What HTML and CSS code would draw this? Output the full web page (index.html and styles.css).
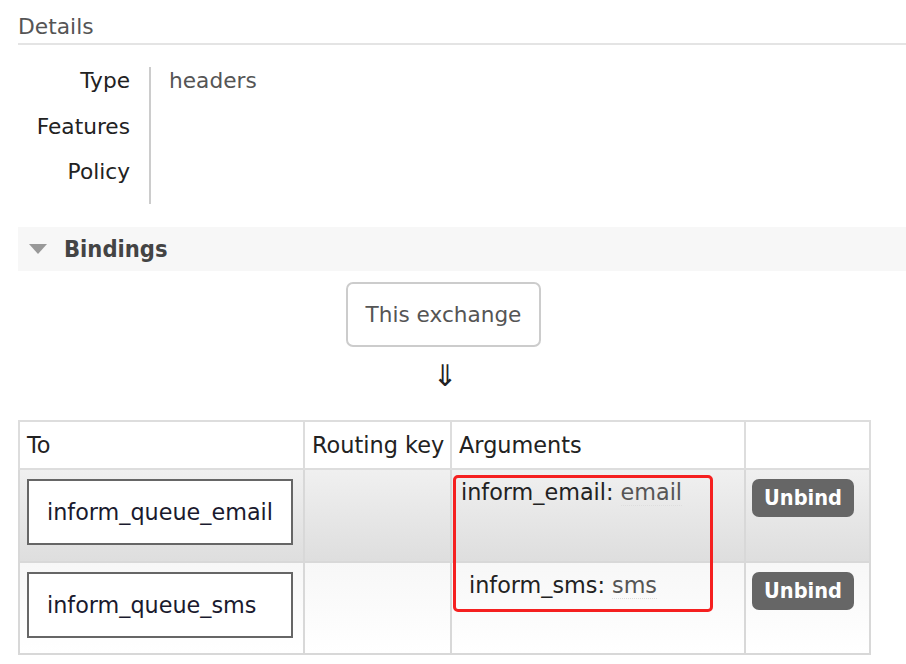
FILE: index.html
```html
<!DOCTYPE html>
<html>
<head>
<meta charset="utf-8">
<link rel="stylesheet" href="styles.css">
</head>
<body>
<div class="page">
  <h2 class="section-title">Details</h2>
  <div class="props">
    <div class="labels">
      <div class="row">Type</div>
      <div class="row">Features</div>
      <div class="row">Policy</div>
    </div>
    <div class="values">
      <div class="row">headers</div>
      <div class="row"></div>
      <div class="row"></div>
    </div>
  </div>

  <div class="bar">
    <span class="tri"></span>
    <span class="bar-title">Bindings</span>
  </div>

  <div class="bindings">
    <div class="flow">
      <div class="exchange">This exchange</div>
      <div class="arrow">&#8659;</div>
    </div>
    <div class="table-wrap">
      <table class="tbl">
        <colgroup>
          <col class="c1"><col class="c2"><col class="c3"><col class="c4">
        </colgroup>
        <thead>
          <tr><th>To</th><th>Routing key</th><th>Arguments</th><th></th></tr>
        </thead>
        <tbody>
          <tr class="r1">
            <td><div class="queue">inform_queue_email</div></td>
            <td></td>
            <td class="args">inform_email: <span class="val">email</span></td>
            <td><span class="btn">Unbind</span></td>
          </tr>
          <tr class="r2">
            <td><div class="queue">inform_queue_sms</div></td>
            <td></td>
            <td class="args args2">inform_sms: <span class="val">sms</span></td>
            <td><span class="btn">Unbind</span></td>
          </tr>
        </tbody>
      </table>
      <div class="highlight"></div>
    </div>
  </div>
</div>
</body>
</html>
```

FILE: styles.css
```css
html, body {
  margin: 0;
  padding: 0;
  background: #fff;
}
body {
  font-family: "DejaVu Sans", Verdana, sans-serif;
  font-size: 21.5px;
  color: #222;
}
.page {
  padding-left: 18px;
}
.section-title {
  margin: 0;
  font-size: 21.8px;
  font-weight: normal;
  color: #555;
  height: 43px;
  line-height: 53px;
  border-bottom: 2px solid #e4e4e4;
}
.props {
  display: flex;
  margin-top: 22px;
}
.labels {
  width: 112px;
  padding-right: 19px;
  text-align: right;
  border-right: 2px solid #ccc;
}
.values {
  padding-left: 18px;
  color: #555;
}
.row {
  height: 45.5px;
  line-height: 28px;
  font-size: 21.7px;
}
.bar {
  margin-top: 23px;
  height: 44px;
  background: #f7f7f7;
  display: flex;
  align-items: center;
}
.tri {
  width: 0;
  height: 0;
  margin-left: 11px;
  border-left: 9px solid transparent;
  border-right: 9px solid transparent;
  border-top: 10px solid #999;
}
.bar-title {
  margin-left: 17px;
  font-family: "DejaVu Sans Condensed", "DejaVu Sans", sans-serif;
  font-weight: bold;
  font-size: 23.5px;
  color: #444;
}
.bindings {
  width: 851px;
}
.flow {
  display: flex;
  flex-direction: column;
  align-items: center;
  padding-top: 11px;
}
.exchange {
  width: 195px;
  height: 65px;
  box-sizing: border-box;
  border: 2px solid #ccc;
  border-radius: 7px;
  display: flex;
  align-items: center;
  justify-content: center;
  color: #555;
  font-size: 21.6px;
}
.arrow {
  font-size: 30px;
  line-height: 40px;
  margin-top: 9px;
  color: #222;
  padding-left: 3px;
}
.table-wrap {
  position: relative;
  margin-top: 24px;
}
.tbl {
  width: 851px;
  table-layout: fixed;
  border-collapse: collapse;
  border: 2px solid #ddd;
}
.c1 { width: 285px; }
.c2 { width: 147px; }
.c3 { width: 294px; }
.c4 { width: 125px; }
.tbl th {
  height: 46px;
  border: 2px solid #ddd;
  text-align: left;
  font-weight: normal;
  padding: 0 0 0 7px;
  white-space: nowrap;
  overflow: hidden;
  color: #222;
  font-size: 22.4px;
  vertical-align: middle;
}
.tbl td {
  border: 2px solid #d8d8d8;
  vertical-align: top;
  padding: 9px 7px 0;
}
.r1 { height: 93px; }
.r2 { height: 92px; }
.r1 td {
  background: linear-gradient(#f0f0f0, #dedede);
}
.r2 td {
  background: linear-gradient(#f7f7f7, #ffffff);
}
.queue {
  width: 266px;
  height: 66px;
  box-sizing: border-box;
  border: 2px solid #666;
  background: #fff;
  padding-left: 18px;
  display: flex;
  align-items: center;
  color: #1a1a2e;
  font-size: 22.3px;
}
.args {
  font-size: 22.3px;
  padding-top: 9px !important;
  padding-left: 9px !important;
  color: #222;
  white-space: nowrap;
}
.args2 {
  padding-left: 17px !important;
}
.val {
  color: #555;
  border-bottom: 1px dotted #ddd;
}
.btn {
  display: inline-block;
  margin-left: -1px;
  width: 102px;
  height: 38px;
  line-height: 38px;
  text-align: center;
  background: #666;
  color: #fff;
  font-family: "DejaVu Sans Condensed", "DejaVu Sans", sans-serif;
  font-weight: bold;
  border-radius: 7px;
  font-size: 21.6px;
}
.highlight {
  position: absolute;
  left: 435px;
  top: 55px;
  width: 260px;
  height: 137px;
  box-sizing: border-box;
  border: 3px solid #f52020;
  border-radius: 5px;
}
```
